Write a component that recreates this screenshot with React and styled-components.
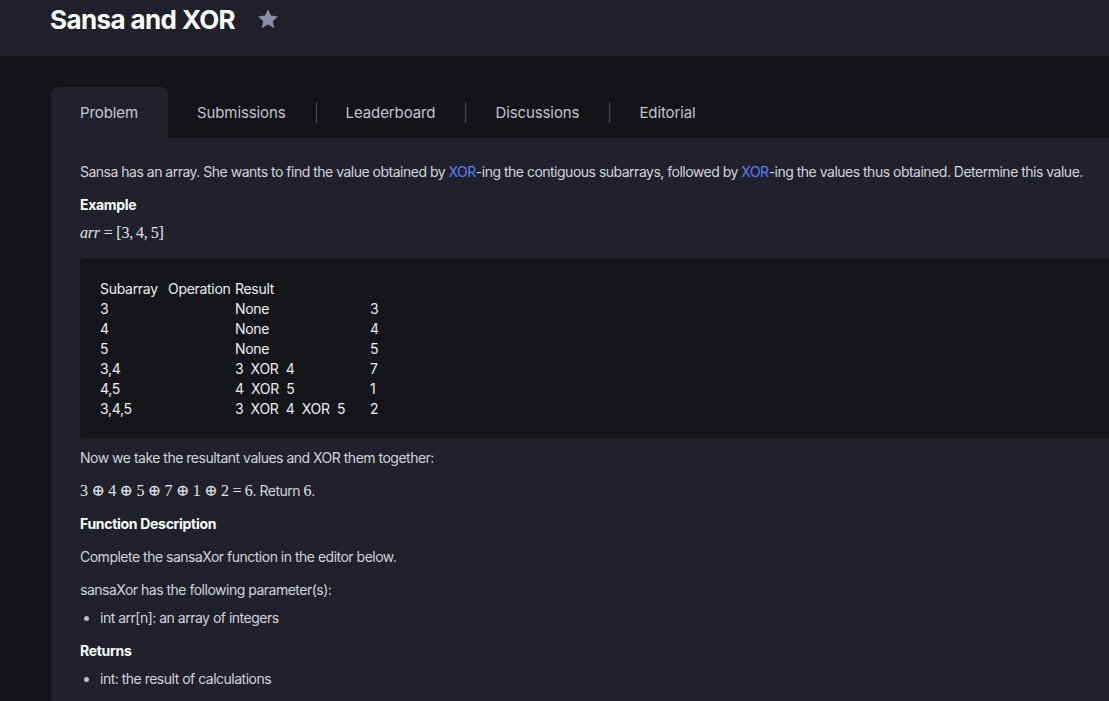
import React from "react";
import styled, { createGlobalStyle } from "styled-components";

const GlobalStyle = createGlobalStyle`
  html, body {
    margin: 0;
    padding: 0;
    background: #131318;
    font-family: Inter, "Noto Sans", sans-serif;
    color: #d3d3db;
    overflow: hidden;
  }
`;

const tabs = ["Problem", "Submissions", "Leaderboard", "Discussions", "Editorial"];

const rows = [
  ["3", "None", "3"],
  ["4", "None", "4"],
  ["5", "None", "5"],
  ["3,4", "3  XOR  4", "7"],
  ["4,5", "4  XOR  5", "1"],
  ["3,4,5", "3  XOR  4  XOR  5", "2"],
];

function Star() {
  return (
    <StarIcon viewBox="0 0 24 24">
      <path d="M12 2.2l3 6.4 7 .8-5.2 4.8 1.5 7L12 17.6l-6.3 3.6 1.5-7L2 9.4l7-.8z" />
    </StarIcon>
  );
}

export default function App() {
  return (
    <>
      <GlobalStyle />
      <Header>
        <Title>Sansa and XOR</Title>
        <Star />
      </Header>
      <Main>
        <TabBar>
          {tabs.map((t, i) => (
            <React.Fragment key={t}>
              {i > 1 && <Divider />}
              <Tab $active={i === 0}>{t}</Tab>
            </React.Fragment>
          ))}
        </TabBar>
        <Panel>
          <Text>
            Sansa has an array. She wants to find the value obtained by{" "}
            <Link>XOR</Link>-ing the contiguous subarrays, followed by{" "}
            <Link>XOR</Link>-ing the values thus obtained. Determine this value.
          </Text>
          <Heading>Example</Heading>
          <MathLine $gap={16}>
            <i>arr</i> = [3,{"\u2009"}4,{"\u2009"}5]
          </MathLine>
          <CodeBlock>
            <CodeGrid>
              <span>Subarray</span>
              <span>Operation</span>
              <span>Result</span>
              <span />
              {rows.map((r) => (
                <React.Fragment key={r[0]}>
                  <span>{r[0]}</span>
                  <span />
                  <span>{r[1]}</span>
                  <span>{r[2]}</span>
                </React.Fragment>
              ))}
            </CodeGrid>
          </CodeBlock>
          <Text>Now we take the resultant values and XOR them together:</Text>
          <Text>
            <Math>3 ⊕ 4 ⊕ 5 ⊕ 7 ⊕ 1 ⊕ 2 = 6</Math>. Return <Math>6</Math>.
          </Text>
          <Heading $gap={13}>Function Description</Heading>
          <Text>Complete the sansaXor function in the editor below.</Text>
          <Text $gap={8}>sansaXor has the following parameter(s):</Text>
          <List>
            <li>int arr[n]: an array of integers</li>
          </List>
          <Heading>Returns</Heading>
          <List>
            <li>int: the result of calculations</li>
          </List>
        </Panel>
      </Main>
    </>
  );
}

const Header = styled.header`
  height: 56px;
  background: #20202a;
  display: flex;
  align-items: center;
  padding: 0 0 18px 50px;
  box-sizing: border-box;
  gap: 21px;
`;

const Title = styled.h1`
  margin: 0;
  font-size: 26px;
  font-weight: 700;
  color: #ffffff;
  letter-spacing: -0.6px;
`;

const StarIcon = styled.svg`
  width: 24px;
  height: 24px;
  fill: #8b8ba6;
`;

const Main = styled.main`
  padding: 31px 0 0 51px;
`;

const TabBar = styled.nav`
  display: flex;
  align-items: center;
  height: 51px;
`;

const Tab = styled.div`
  height: 100%;
  display: flex;
  align-items: center;
  padding: 0 30px 0 29px;
  font-size: 15px;
  letter-spacing: -0.1px;
  color: ${(p) => (p.$active ? "#c9c9d6" : "#c3c3cf")};
  background: ${(p) => (p.$active ? "#21212b" : "transparent")};
  border-radius: 7px 7px 0 0;
`;

const Divider = styled.span`
  width: 1px;
  height: 21px;
  background: #4a4a55;
`;

const Panel = styled.section`
  background: #21212b;
  padding: 24px 0 40px 29px;
  min-height: 600px;
  letter-spacing: -0.5px;
`;

const Text = styled.p`
  margin: 0 0 ${(p) => p.$gap ?? 13}px;
  font-size: 14px;
  line-height: 20px;
  color: #d3d3db;
  white-space: nowrap;
`;

const Link = styled.span`
  color: #5c7cff;
`;

const Heading = styled.h3`
  margin: 0 0 ${(p) => p.$gap ?? 8}px;
  font-size: 14px;
  line-height: 20px;
  font-weight: 700;
  letter-spacing: -0.3px;
  color: #ffffff;
`;

const MathLine = styled.p`
  margin: 0 0 ${(p) => p.$gap ?? 13}px;
  font-family: "Liberation Serif", "DejaVu Serif", serif;
  font-size: 16px;
  line-height: 20px;
  letter-spacing: -0.2px;
  color: #e4e4ea;
`;

const Math = styled.span`
  font-family: "Liberation Serif", "DejaVu Serif", serif;
  font-size: 16px;
  letter-spacing: -0.3px;
  color: #e4e4ea;
`;

const CodeBlock = styled.div`
  background: #15161a;
  border-radius: 4px 0 0 4px;
  padding: 20px 20px 19px;
  margin-bottom: 10px;
`;

const CodeGrid = styled.div`
  display: grid;
  grid-template-columns: 68px 67px 135px auto;
  font-size: 14px;
  line-height: 20px;
  letter-spacing: -0.3px;
  color: #ececf0;
  white-space: pre;
`;

const List = styled.ul`
  margin: 0 0 13px;
  padding-left: 20px;
  font-size: 14px;
  line-height: 20px;
  color: #d3d3db;
  li::marker {
    color: #c0c0c8;
  }
`;
